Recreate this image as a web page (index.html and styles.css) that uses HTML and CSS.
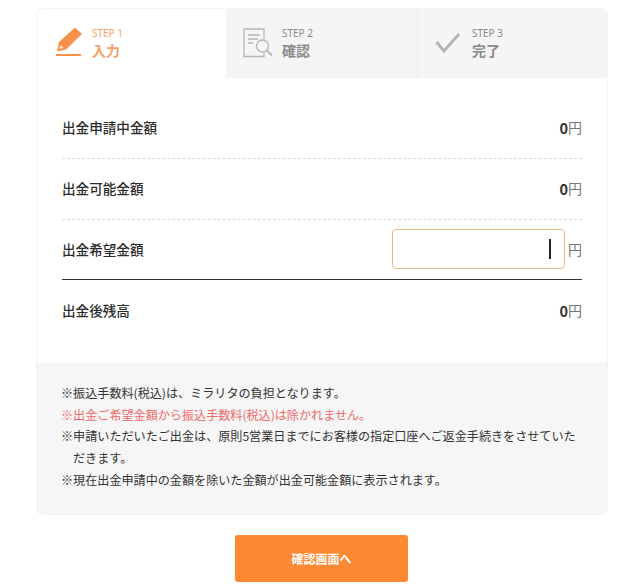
FILE: index.html
```html
<!DOCTYPE html>
<html lang="ja">
<head>
<meta charset="utf-8">
<title>出金申請</title>
<link rel="stylesheet" href="styles.css">
</head>
<body>
<main class="card">
  <ol class="steps">
    <li class="step step-active">
      <svg class="icon" width="28" height="30" viewBox="0 0 28 30"><path d="M19 .5 L26 7 L10 22.500 L1 24.500 L3 15 Z" fill="#f8924a"/><path d="M4.500 18 L7.500 21 L3 22 Z" fill="#fde3cf"/><rect x="0" y="27" width="25" height="2" fill="#f8924a"/></svg>
      <div class="step-text"><span class="step-no">STEP 1</span><strong class="step-name">入力</strong></div>
    </li>
    <li class="step step-mid">
      <svg class="icon" width="30" height="30" viewBox="0 0 30 30" fill="none" stroke="#b5b5b5" stroke-width="1.300"><path d="M21 11 V1 H1 V28.500 H21 V25"/><path d="M5 7 H17 M5 11 H15 M5 15 H10"/><circle cx="19.500" cy="18" r="6"/><path d="M24 22.500 L29 27.500" stroke-width="2"/></svg>
      <div class="step-text"><span class="step-no">STEP 2</span><strong class="step-name">確認</strong></div>
    </li>
    <li class="step step-last">
      <svg class="icon" width="26" height="22" viewBox="0 0 26 22" fill="none" stroke="#b5b5b5" stroke-width="3"><path d="M1.500 10 L9 19 L24 2"/></svg>
      <div class="step-text"><span class="step-no">STEP 3</span><strong class="step-name">完了</strong></div>
    </li>
  </ol>
  <section class="rows">
    <div class="row row-dotted"><span class="label">出金申請中金額</span><span class="value"><b>0</b>円</span></div>
    <div class="row row-dotted"><span class="label">出金可能金額</span><span class="value"><b>0</b>円</span></div>
    <div class="row row-solid">
      <span class="label">出金希望金額</span>
      <span class="value"><span class="field"><span class="caret"></span></span><span class="unit">円</span></span>
    </div>
    <div class="row row-last"><span class="label">出金後残高</span><span class="value"><b>0</b>円</span></div>
  </section>
  <ul class="notes">
    <li>※振込手数料(税込)は、ミラリタの負担となります。</li>
    <li class="note-red">※出金ご希望金額から振込手数料(税込)は除かれません。</li>
    <li>※申請いただいたご出金は、原則5営業日までにお客様の指定口座へご返金手続きをさせていただきます。</li>
    <li>※現在出金申請中の金額を除いた金額が出金可能金額に表示されます。</li>
  </ul>
</main>
<div class="actions"><button class="submit" type="button">確認画面へ</button></div>
</body>
</html>
```
FILE: styles.css
```css
* { box-sizing: border-box; }
html, body { margin: 0; padding: 0; background: #fff; }
body {
  padding: 9px 33px 0 37px;
  font-family: "Noto Sans CJK JP", "Noto Sans", sans-serif;
  color: #333;
  overflow: hidden;
  height: 587px;
}
.card {
  width: 570px;
  height: 505px;
  border-radius: 6px;
  box-shadow: 0 0 0 1px #f3f3f3;
  overflow: hidden;
  display: flex;
  flex-direction: column;
}
.steps {
  list-style: none;
  margin: 0;
  padding: 0;
  display: grid;
  grid-template-columns: 189px 191px 190px;
  height: 69px;
}
.step {
  display: flex;
  align-items: center;
  gap: 9px;
  padding: 0 0 2px 17px;
  background: #f5f5f5;
  color: #8a8a8a;
}
.step-active { background: #fff; color: #f8a068; padding-left: 19px; padding-bottom: 4px; gap: 8px; }
.step-active .step-text { margin-top: 2px; }
.step-last { border-left: 1px solid #ebebeb; gap: 11px; }
.step-text { display: flex; flex-direction: column; }
.step-no { font-size: 10px; line-height: 14px; font-family: "Noto Sans", sans-serif; }
.step-name { font-size: 14px; line-height: 20px; font-weight: 700; }
.rows { padding: 20px 25px 0; flex: 1; }
.row {
  display: flex;
  justify-content: space-between;
  align-items: center;
  height: 61px;
  padding-bottom: 2px;
  font-size: 13.600px;
}
.row-dotted { border-bottom: 1px dashed #d8d8d8; }
.row-solid { border-bottom: 1px solid #333; height: 60px; }
.row-last { height: 62px; }
.label { font-weight: 500; color: #2c2c2c; }
.value { display: flex; align-items: center; color: #777; font-size: 14px; }
.value b { color: #333; font-size: 14.500px; font-weight: 700; }
.field {
  position: relative;
  width: 173px;
  height: 40px;
  border: 1px solid #e9b98a;
  border-radius: 4px;
  background: #fff;
}
.caret {
  position: absolute;
  left: 156px;
  top: 9px;
  width: 2px;
  height: 20px;
  background: #222;
}
.unit { margin-left: 3px; }
.notes {
  list-style: none;
  margin: 0;
  padding: 20px 25px 0;
  background: #f6f6f6;
  font-size: 12.100px;
  line-height: 21.700px;
  height: 152px;
}
.notes li { padding-left: 11px; text-indent: -12px; }
.note-red { color: #ee6a6a; }
.actions { display: flex; justify-content: center; padding: 21px 1px 0 0; }
.submit {
  width: 173px;
  height: 47px;
  border: 0;
  border-radius: 3px;
  background: #ff8833;
  color: #fff;
  font-family: inherit;
  font-size: 12px;
  font-weight: 700;
}
```
